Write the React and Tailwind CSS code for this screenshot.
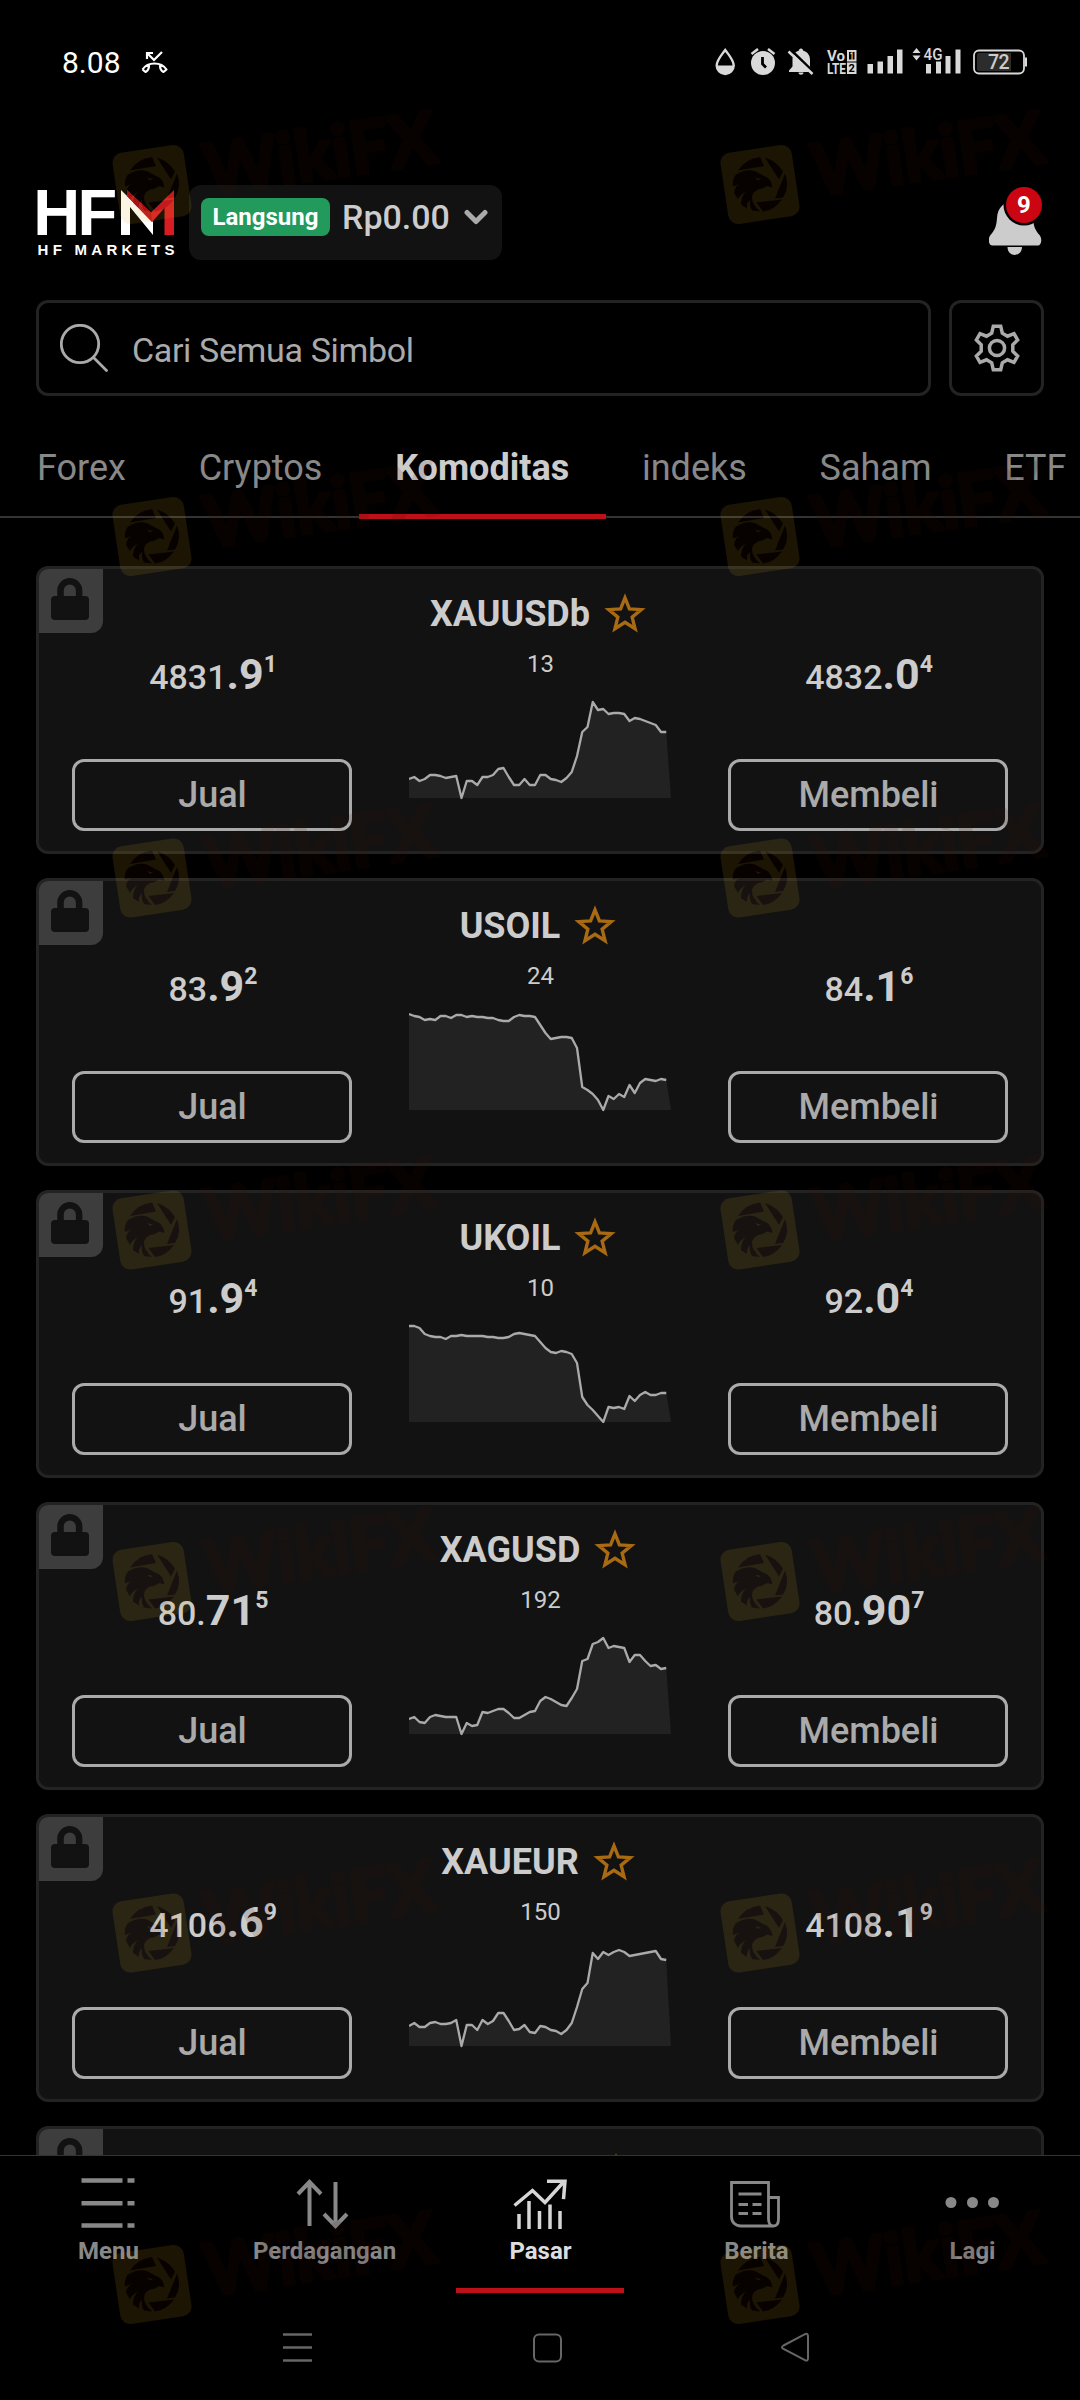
import React, { useState } from 'react';

const CHART_STEP = 5.25;
const CHART_HEIGHT = 96;

const goldTrend = [19, 21, 17, 19, 23, 23, 22, 20, 21, 22, 0, 17, 17, 13, 21, 21, 23, 29, 30, 21, 13, 13, 19, 13, 13, 23, 23, 19, 18, 16, 20, 26, 42, 66, 71, 96, 88, 89, 84, 85, 85, 84, 77, 80, 79, 77, 75, 73, 66, 66];
const usoilTrend = [96, 94, 93, 90, 91, 90, 94, 94, 92, 95, 95, 93, 94, 93, 93, 92, 92, 90, 89, 89, 93, 95, 94, 94, 93, 85, 77, 71, 72, 73, 73, 72, 62, 23, 20, 16, 10, 0, 14, 11, 16, 13, 25, 17, 27, 31, 30, 29, 31, 30];
const ukoilTrend = [96, 96, 94, 88, 86, 85, 85, 83, 86, 86, 87, 86, 86, 86, 86, 85, 85, 84, 84, 85, 88, 89, 88, 87, 86, 80, 74, 70, 69, 71, 70, 68, 59, 25, 17, 12, 6, 0, 15, 14, 15, 13, 26, 21, 27, 30, 27, 27, 29, 29];
const silverTrend = [15, 17, 12, 11, 17, 19, 18, 17, 17, 17, 0, 11, 8, 9, 22, 21, 23, 25, 25, 21, 16, 16, 19, 22, 23, 33, 37, 35, 32, 29, 28, 36, 45, 73, 75, 90, 92, 96, 86, 88, 87, 86, 72, 79, 79, 73, 68, 69, 65, 66];
const xaueurTrend = [20, 23, 19, 19, 23, 24, 22, 22, 23, 26, 0, 21, 21, 16, 26, 22, 25, 33, 33, 25, 16, 17, 21, 14, 13, 20, 19, 16, 15, 12, 16, 23, 39, 57, 63, 93, 87, 94, 91, 94, 96, 94, 90, 91, 92, 93, 94, 95, 87, 86];

// price = [small, big, superscript]
const symbols = [
  { name: 'XAUUSDb', spread: 13, sell: ['4831', '.9', '1'], buy: ['4832', '.0', '4'], trend: goldTrend },
  { name: 'USOIL', spread: 24, sell: ['83', '.9', '2'], buy: ['84', '.1', '6'], trend: usoilTrend },
  { name: 'UKOIL', spread: 10, sell: ['91', '.9', '4'], buy: ['92', '.0', '4'], trend: ukoilTrend },
  { name: 'XAGUSD', spread: 192, sell: ['80.', '71', '5'], buy: ['80.', '90', '7'], trend: silverTrend },
  { name: 'XAUEUR', spread: 150, sell: ['4106', '.6', '9'], buy: ['4108', '.1', '9'], trend: xaueurTrend },
];

const tabs = ['Forex', 'Cryptos', 'Komoditas', 'indeks', 'Saham', 'ETF'];

const watermarkRows = [184.5, 536.5, 878, 1230, 1581.5, 1933, 2284.5];

// --- STATUS BAR ---

const StatusBar = () => (
  <div className="h-[185px] shrink-0 flex items-start justify-between pt-[45px] pl-[62px] pr-[53px]">
    <div className="flex items-center gap-5 h-9 text-white text-[30px] leading-9">
      <span>8.08</span>
      <svg width="27" height="23" viewBox="0 0 27 23" fill="none" stroke="#fff" strokeWidth="2.2" className="-mt-0.5">
        <path d="M6 8V2h6M6 2l7 7 8-8" />
        <path d="M1.500 18.500C7 10.500 20 10.500 25.500 18.500L22.500 21C20.500 20 19 18 19 14.500M1.500 18.500L4.500 21C6.500 20 8 18 8 14.500" strokeLinejoin="round" />
      </svg>
    </div>
    <svg width="312" height="30" viewBox="715 47 312 30" fill="#d9d9d9" className="mt-0.5 overflow-visible">
      <path d="M725.200 50c4 5.500 8.500 10 8.500 15.500a8.500 8.500 0 0 1-17 0c0-5.500 4.500-10 8.500-15.500z" fill="none" stroke="#d9d9d9" strokeWidth="2.400" />
      <path d="M716 65.500h18.500a9.300 9.300 0 0 1-18.500 0z" />
      <circle cx="763" cy="63" r="12" />
      <path d="M751.500 54l6.500-5M774.500 54l-6.500-5" stroke="#d9d9d9" strokeWidth="2.600" />
      <path d="M762.500 57v7l3.500 3.500" fill="none" stroke="#000" strokeWidth="2.800" />
      <path d="M801 48.500c1.500 0 2 1 2 2 5 1.500 7 5 7 9.500v7l3.500 5H789v-1.500l3.500-4V60c0-5 2-8 6.500-9.500 0-1 .5-2 2-2zM798.500 72.500h5c0 3-5 3-5 0z" />
      <path d="M790 49l24.500 24" stroke="#000" strokeWidth="2.500" />
      <path d="M788.500 51.500l24 22.500" stroke="#d9d9d9" strokeWidth="2.600" />
      <text x="827" y="61.200" fontSize="15.500" fontWeight="700" textLength="18" lengthAdjust="spacingAndGlyphs">Vo</text>
      <text x="827" y="73.800" fontSize="15.500" fontWeight="700" textLength="19" lengthAdjust="spacingAndGlyphs">LTE</text>
      <rect x="848" y="51" width="7.500" height="9.500" fill="none" stroke="#d9d9d9" strokeWidth="2" />
      <text x="849.700" y="60" fontSize="10" fontWeight="700" textLength="4" lengthAdjust="spacingAndGlyphs">1</text>
      <rect x="847" y="62.500" width="9.500" height="11.500" />
      <text x="848.500" y="72.200" fontSize="11" fontWeight="700" fill="#000">2</text>
      <path d="M867.500 64h5.500v9.500h-5.500zM877.500 61.500h5.500v12h-5.500zM887.500 56h5.500v17.500h-5.500zM897 49.500h5.500v24h-5.500z" />
      <path d="M916.500 48l4 5h-8zM916.500 60.500l4-5h-8z" />
      <text x="923.500" y="60" fontSize="17" fontWeight="500" textLength="19" lengthAdjust="spacingAndGlyphs">4G</text>
      <path d="M926 64h5v9.500h-5zM936 61.500h5v12h-5zM945.500 56h5v17.500h-5zM955.500 49.500h5v24h-5z" />
      <rect x="974" y="50.500" width="50" height="23" rx="5" fill="none" stroke="#d9d9d9" strokeWidth="1.800" />
      <path d="M979 53h32v18h-32a2 2 0 0 1-2-2V55a2 2 0 0 1 2-2z" fill="#2c2c2c" />
      <path d="M1025 57.500h2v9h-2z" />
      <text x="988" y="69" fontSize="19.500" fontWeight="500" fill="#ccc" textLength="21.500">72</text>
    </svg>
  </div>
);

// --- HEADER ---

const Logo = () => (
  <svg width="140" height="75" viewBox="36 185 140 75" fill="#fff" fontFamily="'Liberation Sans', Arial, sans-serif" fontWeight="700" className="overflow-visible">
    <text x="33.200" y="235" fontSize="65" textLength="84">HF</text>
    <path d="M121 190l32 32v13l-23-28v28h-9z" />
    <path d="M127 190l24 22.500L174 190v45h-9.500v-27L152 222l-25-26z" fill="#d81c22" />
    <path d="M127 190l24 22.500 1 9.500-25-26z" fill="#bb1018" />
    <text x="37.500" y="255" fontSize="15" textLength="137">HF MARKETS</text>
  </svg>
);

const Header = () => (
  <div className="h-[75px] shrink-0 flex items-center pl-9 pr-9">
    <Logo />
    <div className="ml-[13px] w-[313px] h-[75px] bg-[#121212] rounded-xl flex items-start pt-[13px] pl-3">
      <span className="w-[129px] h-[38px] bg-[#219a5c] rounded-lg text-white text-[24px] leading-[38px] font-bold text-center">Langsung</span>
      <span className="ml-3 w-[107px] text-[#ccc] text-[34px] leading-[38px] font-medium">Rp0.00</span>
      <svg width="24" height="16" viewBox="0 0 24 16" fill="none" stroke="#aaa" strokeWidth="5" strokeLinecap="round" strokeLinejoin="round" className="ml-[15px] mt-[11px]">
        <path d="M3 3.500l9 9 9-9" />
      </svg>
    </div>
    <div className="relative ml-auto w-[55px] h-[75px]">
      <svg width="55" height="75" viewBox="989 185 55 75" fill="#ccc">
        <path d="M1015 200c-11 1-17.500 8-18 18-.5 8-2 12-6.500 17-3 3.500-2 10.500 2 10.500h45c4 0 5-7 2-10.500-4.500-5-6-9-6.500-17-.5-10-7-17-18-18zM1007.500 247h14.500c0 10.500-14.500 10.500-14.500 0z" />
        <circle cx="1024" cy="205" r="20.500" fill="#000" />
      </svg>
      <span className="absolute left-[17px] top-[2px] w-9 h-9 rounded-full bg-[#cc0512] text-white text-[24px] leading-9 font-bold text-center">9</span>
    </div>
  </div>
);

const SearchRow = () => (
  <div className="mt-10 px-9 flex gap-[18px] shrink-0">
    <div className="flex-1 h-24 border-[3px] border-[#232323] rounded-xl flex items-center pl-[21px]">
      <svg width="48" height="48" viewBox="0 0 48 48" fill="none" stroke="#aaa" strokeWidth="2.800" strokeLinecap="round">
        <circle cx="20" cy="20" r="18.700" />
        <path d="M33.500 33.500L46.500 46.500" />
      </svg>
      <span className="ml-6 mt-[3px] text-[#aaa] text-[34px] leading-10 tracking-[-0.35px]">Cari Semua Simbol</span>
    </div>
    <div className="w-[95px] h-24 border-[3px] border-[#232323] rounded-xl flex items-center justify-center">
      <svg width="48" height="48" viewBox="0 0 48 48" fill="none" stroke="#aaa" strokeWidth="3.500">
        <circle cx="24" cy="24" r="7.600" />
        <path d="M20.300 2.200h7.400l1.600 7 5.200 3 6.500-2.600 3.600 6.300-4.800 4.800v6.600l4.800 4.800-3.600 6.300-6.500-2.600-5.200 3-1.600 7h-7.400l-1.600-7-5.200-3L7 38.400l-3.600-6.300 4.800-4.800v-6.600l-4.800-4.800L7 9.600l6.500 2.600 5.200-3z" />
      </svg>
    </div>
  </div>
);

// --- SYMBOL CARD ---

const Price = ({ parts }) => (
  <div className="flex items-baseline justify-center h-12 pl-[2px] text-[#ccc] leading-[48px]">
    <span className="text-[34px] font-medium">{parts[0]}</span>
    <span className="text-[43px] font-bold">{parts[1]}</span>
    <span className="relative -top-[17px] text-[23px] font-bold">{parts[2]}</span>
  </div>
);

const Sparkline = ({ values }) => {
  const points = values.map((v, i) => `${i * CHART_STEP},${CHART_HEIGHT + 2 - v}`).join(' ');
  const base = CHART_HEIGHT + 2;
  return (
    <svg width="264" height="100" viewBox="0 0 264 100" fill="none">
      <polygon points={`0,${base} ${points} ${50 * CHART_STEP - 0.5},${base}`} fill="#222" />
      <polyline points={points} stroke="#aaa" strokeWidth="2.300" strokeLinejoin="round" />
    </svg>
  );
};

const SymbolCard = ({ item }) => (
  <div className="relative h-[288px] shrink-0 bg-[#121212] border-[3px] border-[#232323] rounded-xl overflow-hidden px-[33px] grid grid-cols-[280px_1fr_280px]">
    <div className="absolute left-0 top-0 w-16 h-16 bg-[#3d3d3d] rounded-br-xl">
      <svg width="64" height="64" viewBox="0 0 64 64" fill="#121212">
        <rect x="12" y="27" width="38" height="24" rx="4" />
        <path d="M21.500 29v-7.500a9.300 9.300 0 0 1 18.600 0V29" fill="none" stroke="#121212" strokeWidth="6.500" />
      </svg>
    </div>

    <div className="pt-[81px] flex flex-col">
      <Price parts={item.sell} />
      <button className="mt-[61px] h-[72px] pl-[1px] border-[3px] border-[#aaa] rounded-xl text-[#aaa] text-[36px] leading-none font-medium">Jual</button>
    </div>

    <div className="flex flex-col items-center">
      <div className="mt-[20px] pr-1 flex items-center gap-[14px] h-[50px] text-[#ccc] text-[36px] leading-[50px] font-bold">
        {item.name}
        <svg width="42" height="42" viewBox="0 0 40 40" fill="none" stroke="#a86a12" strokeWidth="3.2" className="-mt-0.5">
          <path d="M20 5.500l4.200 10.600 11.300.7-8.700 7.200 2.800 11L20 28.900 10.400 35l2.800-11-8.700-7.200 11.300-.7z" />
        </svg>
      </div>
      <span className="mt-[10px] pl-[1px] text-[#ccc] text-[24px] leading-[30px]">{item.spread}</span>
      <div className="mt-[21px] pl-[2px]">
        <Sparkline values={item.trend} />
      </div>
    </div>

    <div className="pt-[81px] flex flex-col">
      <Price parts={item.buy} />
      <button className="mt-[61px] h-[72px] pl-[1px] border-[3px] border-[#aaa] rounded-xl text-[#aaa] text-[36px] leading-none font-medium">Membeli</button>
    </div>
  </div>
);

// --- BOTTOM NAVIGATION ---

const navItems = [
  {
    label: 'Menu',
    icon: <path d="M1.500 8.500h41M47.500 8.500h7M1.500 31.200h41M47.500 31.200h7M1.500 53.500h41M47.500 53.500h7" strokeWidth="4.500" />,
  },
  {
    label: 'Perdagangan',
    icon: <path d="M13.500 54V10M2 22L13.500 10 25 22M39.500 10v43M28 42l11.500 12L51 42" strokeWidth="4" />,
  },
  {
    label: 'Pasar',
    icon: (
      <>
        <path d="M2.500 33.500L20.500 18.500 33 30.500 52.500 9M35 9.200h18l-1.500 18" strokeWidth="3.500" />
        <path d="M7 57V42M17 57V29M27.500 57V39M38 57V32.500M48 57V39" strokeWidth="3.500" />
      </>
    ),
  },
  {
    label: 'Berita',
    icon: (
      <>
        <path d="M3.500 10.500h37V47c0 3.500 1.500 7 5 7H13c-6 0-9.500-4-9.500-9.500zM40.500 25.500h10V47c0 4.500-1.500 7-5 7" strokeWidth="2.800" />
        <path d="M10.500 22h23M10.500 32.500h9.500M24.500 32.500h9M10.500 41.500h9.500M24.500 41.500h9" strokeWidth="3" />
      </>
    ),
  },
  {
    label: 'Lagi',
    icon: (
      <g fill="#888" stroke="none">
        <circle cx="7" cy="30.500" r="5.500" />
        <circle cx="28.500" cy="30.500" r="5.500" />
        <circle cx="49.500" cy="30.500" r="5.500" />
      </g>
    ),
  },
];

const BottomNav = () => {
  const [active, setActive] = useState('Pasar');

  return (
    <div className="h-[152px] shrink-0 border-t border-[#333] grid grid-cols-5">
      {navItems.map((item) => {
        const isActive = item.label === active;
        return (
          <button key={item.label} onClick={() => setActive(item.label)} className="flex flex-col items-center">
            <svg width="56" height="60" viewBox="0 0 56 60" fill="none" stroke={isActive ? '#d6d6d6' : '#888'} className="mt-4">
              {item.icon}
            </svg>
            <span className={`mt-[4px] pl-[1px] text-[24px] leading-[30px] font-bold ${isActive ? 'text-[#ddd]' : 'text-[#888]'}`}>{item.label}</span>
            {isActive && <span className="mt-[22px] w-[168px] h-[5px] bg-[#be1019]"></span>}
          </button>
        );
      })}
    </div>
  );
};

const SystemNav = () => (
  <div className="flex-1 pt-[25px] pl-[283px]">
    <svg width="528" height="32" viewBox="283 2332 528 32" fill="none" stroke="#666" strokeWidth="2.400">
      <path d="M283 2334.500h29M283 2347.500h29M283 2360.500h29" />
      <rect x="534" y="2334.500" width="27" height="27" rx="5" strokeWidth="2" />
      <path d="M783.500 2345.500L805 2334.200q3-1.200 3 2v22q0 3.200-3 2L783.500 2349q-3-1.800 0-3.500z" strokeWidth="2" />
    </svg>
  </div>
);

// --- WATERMARK ---

const WatermarkMark = ({ x, y }) => (
  <g transform={`translate(${x} ${y})`} fill="#3c0f00">
    <rect x="-36" y="-36" width="72" height="72" rx="10" transform="rotate(-8.500)" fill="#e0aa22" />
    <path d="M-22-14Q-14-26 0-27.500L4-18.500-22-14zM5-27Q17-23 23-13L19-5zM25-11Q30 2 23 13L15 14zM22 15Q14 26 3 27L-3.500 18z" />
    <path d="M-24-10Q-14-16-5-13.500L3-9Q11-7 12.500 3L7 1.500Q2 5-2 5-8 8-8 13-8 20 0 27L-8 26Q-11 21-10 15-14 19-13 24L-19 20Q-19 12-14 7-21 11-22 15L-26 8Q-25 1-19-1L-27 2Q-28-5-24-10z" />
    <path d="M-5-7l6 1.500-3 1.500z" fill="#e0aa22" />
    <text
      x="54"
      y="20"
      transform="rotate(-8.500)"
      fontFamily="Lato, sans-serif"
      fontSize="72"
      fontWeight="700"
      stroke="#3c0f00"
      strokeWidth="4"
      strokeLinejoin="round"
      textLength="233"
      lengthAdjust="spacingAndGlyphs"
    >
      WikiFX
    </text>
  </g>
);

const Watermark = () => (
  <svg width="1080" height="2400" viewBox="0 0 1080 2400" className="absolute inset-0 pointer-events-none opacity-[0.12]">
    {watermarkRows.map((y) => (
      <React.Fragment key={y}>
        <WatermarkMark x={152} y={y} />
        <WatermarkMark x={760} y={y} />
      </React.Fragment>
    ))}
  </svg>
);

const App = () => {
  const [activeTab, setActiveTab] = useState('Komoditas');

  return (
    <div className="relative w-[1080px] h-[2400px] bg-black overflow-hidden flex flex-col font-[Roboto,sans-serif]">
      <StatusBar />
      <Header />
      <SearchRow />

      <div className="mt-[42px] h-20 shrink-0 flex border-b-2 border-[#333]">
        {tabs.map((tab) => (
          <button
            key={tab}
            onClick={() => setActiveTab(tab)}
            className={`shrink-0 h-[81px] px-[36.4px] first:pl-[37px] pb-[16px] text-[36px] leading-none border-b-[5px] ${tab === activeTab ? 'text-[#ccc] font-bold border-[#be1019]' : 'text-[#888] border-transparent'}`}
          >
            {tab}
          </button>
        ))}
      </div>

      <div className="h-[1637px] shrink-0 pt-12 px-9 flex flex-col gap-6 overflow-hidden">
        {symbols.map((item) => (
          <SymbolCard key={item.name} item={item} />
        ))}
        <SymbolCard item={{ ...symbols[0], name: 'XAUAUD' }} />
      </div>

      <BottomNav />
      <SystemNav />
      <Watermark />
    </div>
  );
};

export default App;
